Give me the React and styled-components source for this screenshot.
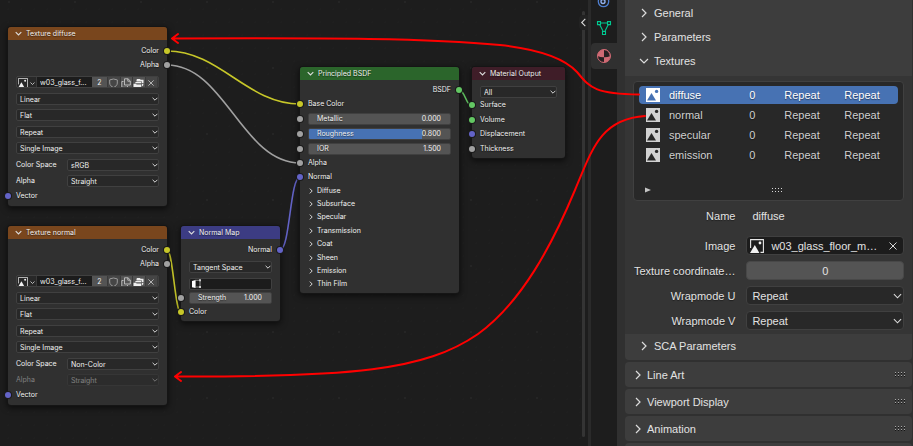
import React from "react";
import styled, { createGlobalStyle, css } from "styled-components";

const GlobalStyle = createGlobalStyle`
  *, *::before, *::after { box-sizing: border-box; }
  body { margin: 0; background: #1d1d1d; }
  button, input, select { font: inherit; color: inherit; margin: 0; padding: 0; border: 0; background: none; }
`;

const Page = styled.main`
  position: relative;
  display: grid;
  grid-template-columns: minmax(0, 591fr) 26px minmax(0, 296fr);
  height: 100vh;
  overflow: hidden;
  font-family: "Liberation Sans", Arial, sans-serif;
  font-size: 11px;
  color: #e2e2e2;
`;

/* ---------- node editor ---------- */

const Editor = styled.section`
  position: relative;
  overflow: hidden;
  border-right: 3px solid #2a2a2a;
  font-family: Inter, "Liberation Sans", sans-serif;
  font-size: 7px;
  line-height: 12px;
  color: #f0f0f0;
  background-color: #1d1d1d;
  background-image: radial-gradient(circle, #252525 1px, transparent 1px),
    radial-gradient(circle, #1f1f1f 1px, transparent 1px);
  background-size: 66px 66px, 13px 13px;
  background-position: 42px 35px, 2px 3px;
`;

const Wires = styled.svg`
  position: absolute;
  left: 0;
  top: 0;
  width: 591px;
  height: 446px;
  fill: none;
`;

const Node = styled.article`
  position: absolute;
  left: ${(p) => p.$x}px;
  top: ${(p) => p.$y}px;
  width: ${(p) => p.$w}px;
  background: #303030;
  border-radius: 3px;
  box-shadow: 0 0 0 1px #151515, 0 2px 6px 1px rgba(0, 0, 0, 0.6);
`;

const NodeHeader = styled.header`
  display: flex;
  align-items: center;
  gap: 4px;
  height: 13px;
  padding-left: 7px;
  border-radius: 3px 3px 0 0;
  background: ${(p) => p.$color};
`;

const NodeTitle = styled.h2`
  margin: 0;
  font-size: inherit;
  font-weight: 400;
  text-shadow: 0 1px 1px rgba(0, 0, 0, 0.5);
`;

const NodeBody = styled.div`
  padding: ${(p) => p.$top || 3}px 8px 2px;
`;

const SocketRow = styled.div`
  position: relative;
  display: flex;
  align-items: center;
  justify-content: ${(p) => (p.$out ? "flex-end" : "flex-start")};
  height: ${(p) => p.$h || 14}px;
  text-shadow: 0 1px 1px rgba(0, 0, 0, 0.5);
`;

const Socket = styled.i`
  position: absolute;
  top: 50%;
  ${(p) => (p.$out ? "right: -11px;" : "left: -11px;")}
  width: 6px;
  height: 6px;
  margin-top: -3px;
  border-radius: 50%;
  background: ${(p) => p.$color};
  box-shadow: 0 0 0 1px #1a1a1a;
`;

const Stack = styled.div`
  display: grid;
  gap: 5px;
  padding-top: ${(p) => p.$top || 0}px;
`;

const Pair = styled.div`
  display: grid;
  gap: 4px;
`;

const SelectBox = styled.span`
  position: relative;
  display: block;
  min-width: 0;
  opacity: ${(p) => (p.$dim ? 0.4 : 1)};
  select {
    display: block;
    width: 100%;
    height: ${(p) => (p.$large ? 19 : 12)}px;
    padding-left: ${(p) => (p.$large ? 5 : 3)}px;
    appearance: none;
    background: #282828;
    border: 1px solid #404040;
    border-radius: ${(p) => (p.$large ? 4 : 2)}px;
    outline: 0;
    opacity: 1;
    color: inherit;
  }
  svg {
    position: absolute;
    right: ${(p) => (p.$large ? 2 : 1)}px;
    top: 50%;
    transform: translateY(-50%);
    pointer-events: none;
  }
`;

const LabelledRow = styled.label`
  display: grid;
  grid-template-columns: 51px minmax(0, 1fr);
  align-items: center;
`;

const LabelText = styled.span`
  color: ${(p) => (p.$dim ? "#808080" : "inherit")};
  white-space: nowrap;
`;

const DataBlock = styled.div`
  display: grid;
  grid-template-columns: 20px minmax(0, 55px) 16px repeat(4, minmax(0, 1fr));
  height: 12px;
  border: 1px solid #404040;
  border-radius: 2px;
  overflow: hidden;
  background: #444;
`;

const BlockButton = styled.button`
  display: flex;
  align-items: center;
  justify-content: center;
  gap: ${(p) => (p.$dark ? 2 : 0)}px;
  min-width: 0;
  overflow: hidden;
  background: ${(p) => (p.$dark ? "#282828" : p.$lit ? "#545454" : "#464646")};
  border-right: 1px solid #3a3a3a;
  line-height: 10px;
  svg { flex: none; }
`;

const BlockName = styled.input`
  min-width: 0;
  width: 100%;
  padding-left: 3px;
  background: #1c1c1c;
  outline: 0;
`;

const Slider = styled.label`
  display: flex;
  align-items: center;
  justify-content: space-between;
  height: 12px;
  width: 100%;
  padding: 0 9px 0 8px;
  border-radius: 2px;
  border: 1px solid #404040;
  background: linear-gradient(90deg, #4772b3 ${(p) => p.$fill || 0}%, #545454 ${(p) => p.$fill || 0}%);
  input {
    width: 32px;
    height: 10px;
    text-align: right;
    outline: 0;
  }
`;

const UvField = styled.button`
  display: flex;
  align-items: center;
  width: 100%;
  height: 12px;
  padding-left: 1px;
  background: #1c1c1c;
  border: 1px solid #404040;
  border-radius: 2px;
`;

const SubPanels = styled.div`
  display: grid;
  grid-auto-rows: 1fr;
  height: 107px;
`;

const SubPanel = styled.button`
  display: flex;
  align-items: center;
  gap: 3px;
  text-align: left;
`;

const ScrollTrack = styled.div`
  position: absolute;
  right: 3px;
  top: 11px;
  bottom: 9px;
  width: 3px;
  border-radius: 2px;
  background: #343434;
`;

const SidebarToggle = styled.button`
  position: absolute;
  right: 0;
  top: 15px;
  width: 9px;
  height: 15px;
  display: flex;
  align-items: center;
  justify-content: center;
  border-radius: 4px 0 0 4px;
  background: #222;
`;

/* ---------- property tabs ---------- */

const TabBar = styled.nav`
  display: flex;
  flex-direction: column;
  gap: 1px;
  margin-top: -11px;
  background: #1d1d1d;
`;

const TabButton = styled.button`
  display: flex;
  align-items: center;
  justify-content: center;
  height: 26px;
  border-radius: 4px 0 0 4px;
  background: ${(p) => (p.$active ? "#303030" : "transparent")};
`;

/* ---------- properties ---------- */

const Properties = styled.aside`
  display: flex;
  flex-direction: column;
  gap: 2px;
  padding: 0 1px 0 8px;
  background: #303030;
  overflow: hidden;
  line-height: 14px;
  text-shadow: 0 1px 1px rgba(0, 0, 0, 0.45);
`;

const Card = styled.section`
  flex: none;
  background: #3d3d3d;
  border-radius: ${(p) => (p.$first ? "0 0 4px 4px" : "4px")};
  padding: ${(p) => (p.$first ? "1px 0 2px" : "0")};
`;

const PanelHeader = styled.button`
  display: flex;
  align-items: center;
  width: 100%;
  height: ${(p) => (p.$nested ? 24 : 25)}px;
  padding: 0 6px 0 ${(p) => (p.$nested ? 14 : 8)}px;
  gap: ${(p) => (p.$nested ? 5 : 4)}px;
  text-align: left;
`;

const HeaderText = styled.span`
  flex: 1;
`;

const PanelBody = styled.div`
  margin-top: 3px;
  padding: 5px 8px 4px;
  background: #353535;
`;

const ListBox = styled.div`
  height: 120px;
  display: flex;
  flex-direction: column;
  justify-content: space-between;
  padding: 2px 5px 5px;
  background: #282828;
  border: 1px solid #404040;
  border-radius: 4px;
`;

const TextureTable = styled.table`
  width: 100%;
  table-layout: fixed;
  border-collapse: separate;
  border-spacing: 0 2px;
`;

const TextureRow = styled.tr`
  color: ${(p) => (p.$selected ? "#fff" : "#cfcfcf")};
  td {
    height: 18px;
    padding: 0;
    ${(p) => p.$selected && css`background: #4772b3;`}
  }
  td:first-child { padding-left: 7px; border-radius: 4px 0 0 4px; }
  td:last-child { border-radius: 0 4px 4px 0; }
  svg { display: block; }
`;

const NameColumn = styled.col`
  width: 31%;
`;
const IconColumn = styled.col`
  width: 30px;
`;
const IndexColumn = styled.col`
  width: 35px;
`;
const ModeColumn = styled.col`
  width: 60px;
`;

const ListFooter = styled.div`
  display: grid;
  grid-template-columns: 10fr auto 9fr;
  align-items: center;
  padding-left: 6px;
  height: 10px;
`;

const FooterToggle = styled.button`
  display: flex;
`;

const Form = styled.div`
  display: grid;
  gap: 6px;
  padding-top: 5px;
`;

const FormRow = styled.label`
  display: grid;
  grid-template-columns: minmax(0, 39fr) minmax(0, 60fr);
  column-gap: 11px;
  align-items: center;
  height: 19px;
  > span:first-child { text-align: right; white-space: nowrap; }
`;

const NameRow = styled(FormRow)`
  margin-bottom: 5px;
`;

const PlainInput = styled.input`
  width: 100%;
  min-width: 0;
  padding-left: 6px;
  outline: 0;
`;

const ImageField = styled.span`
  display: flex;
  align-items: center;
  height: 19px;
  padding: 0 6px 0 3px;
  background: #1c1c1c;
  border: 1px solid #404040;
  border-radius: 4px;
  input { flex: 1; min-width: 0; padding-left: 7px; outline: 0; }
  button { display: flex; }
`;

const NumberInput = styled.input`
  width: 100%;
  height: 19px;
  text-align: center;
  background: #545454;
  border: 1px solid #484848;
  border-radius: 4px;
  outline: 0;
`;

/* ---------- drawings ---------- */

const AnnotationLayer = styled.svg`
  position: absolute;
  left: 0;
  top: 0;
  width: 913px;
  height: 446px;
  fill: none;
  stroke: #ff0000;
  stroke-width: 2;
  stroke-linecap: round;
  stroke-linejoin: round;
  pointer-events: none;
`;

const Chevron = ({ size = 6, dir = "down", color = "#dcdcdc" }) => {
  const d = { down: "M1 3 5 7 9 3", right: "M3 1 7 5 3 9", left: "M7 1 3 5 7 9" }[dir];
  return (
    <svg width={size} height={size} viewBox="0 0 10 10" fill="none" stroke={color} strokeWidth={size > 8 ? 1.2 : 1.6} aria-hidden="true">
      <path d={d} />
    </svg>
  );
};

const TextureIcon = ({ hole }) => (
  <svg width="14" height="14" viewBox="0 0 14 14" aria-hidden="true">
    <rect width="14" height="14" fill={hole === "#4772b3" ? "#fff" : "#d2d2d2"} />
    <path d="M1 12.5 5.5 5 10 12.5Z" fill={hole} />
    <circle cx="10.6" cy="3.4" r="1.7" fill={hole} />
  </svg>
);

const ImageIcon = ({ size = 9 }) => (
  <svg width={size} height={size} viewBox="0 0 14 14" aria-hidden="true">
    <path d="M.6 9V.6H13.4V13.4H10.5" fill="none" stroke="#e6e6e6" strokeWidth="1.1" />
    <path d="M0 14 4.8 6 9.4 14Z" fill="#f0f0f0" />
    <circle cx="10" cy="4" r="1.4" fill="#f0f0f0" />
  </svg>
);

const Cross = ({ size }) => (
  <svg width={size} height={size} viewBox="0 0 8 8" stroke="#d6d6d6" strokeWidth="1" aria-hidden="true">
    <path d="M.5.5 7.5 7.5M7.5.5.5 7.5" />
  </svg>
);

const ShieldIcon = () => (
  <svg width="9" height="10" viewBox="0 0 9 10" fill="none" stroke="#9a9a9a" aria-hidden="true">
    <path d="M4.5 1 8.3 1.9V5C8.3 7.2 6.6 8.6 4.5 9.5 2.4 8.6.7 7.2.7 5V1.9Z" />
  </svg>
);

const CopyIcon = () => (
  <svg width="10" height="10" viewBox="0 0 10 10" fill="none" stroke="#b8b8b8" aria-hidden="true">
    <path d="M3.5.8H7L9.3 3V7H3.5ZM6.8.8V3.2H9.3M2.5 3.5H.8V9.3H6.5V8" />
  </svg>
);

const PackIcon = () => (
  <svg width="11" height="10" viewBox="0 0 11 10" aria-hidden="true">
    <path d="M4 1H7L7.6 1.7H10.5V5H9V3.4H3.5V2Z" fill="#eee" />
    <path d="M2.4 4H8.4V5.2H2.4ZM.5 5.8H3L3.6 6.4H8.2V9.2H.5Z" fill="#eee" />
    <path d="M8.9 6 10.3 5.4V7.2L8.9 8.4Z" fill="#eee" />
  </svg>
);

const UvIcon = () => (
  <svg width="12" height="10" viewBox="0 0 12 10" aria-hidden="true">
    <path d="M1 2 4.6 1V9L1 8.2Z" fill="#fff" />
    <path d="M4 1.3H9M9 1.3V8M5 8H9" stroke="#aaa" strokeWidth=".8" fill="none" />
    <path d="M8 .3H10V2.3H8ZM8 7H10V9H8Z" fill="#ccc" />
  </svg>
);

const Grip = ({ bright }) => (
  <svg width="11" height="5" viewBox="0 0 11 5" fill={bright ? "#d8d8d8" : "#a8a8a8"} shapeRendering="crispEdges" aria-hidden="true">
    {[0, 3, 6, 9].map((x) => (
      <g key={x}>
        {!bright && <path d={`M${x} 1h1v1h-1ZM${x} 4h1v1h-1Z`} fill="#151515" />}
        <path d={`M${x} 0h1v1h-1ZM${x} 3h1v1h-1Z`} />
      </g>
    ))}
  </svg>
);

const PhysicsIcon = () => (
  <svg width="14" height="14" viewBox="0 0 14 14" fill="none" stroke="#4f7fd0" aria-hidden="true">
    <circle cx="6.5" cy="6.5" r="5.2" strokeWidth="1.3" />
    <circle cx="6" cy="6.5" r="2" stroke="#8fb0ee" strokeWidth="1.4" />
  </svg>
);

const MeshIcon = () => (
  <svg width="16" height="16" viewBox="0 0 16 16" fill="none" stroke="#00c890" strokeWidth="1.1" aria-hidden="true">
    <path d="M4.7 2H11.3M3.8 3.7 7.2 10.5M12.2 3.7 8.8 10.5" />
    <path d="M1.5.6H4.5V3.6H1.5ZM11.5.6H14.5V3.6H11.5ZM6.5 10.5H9.5V13.5H6.5Z" />
  </svg>
);

const MaterialIcon = () => (
  <svg width="16" height="16" viewBox="0 0 16 16" aria-hidden="true">
    <circle cx="8" cy="8" r="6.5" fill="#282022" stroke="#d06a74" strokeWidth="1" />
    <path d="M8 1.5A6.5 6.5 0 0 0 1.5 8Q4.5 9.3 8 9.2Z" fill="#d06a74" />
    <path d="M8 9.2Q11.5 9.3 14.5 8A6.5 6.5 0 0 1 8 14.5Z" fill="#d06a74" />
    <path d="M8 1.5Q12 1.8 12.5 4 13.8 5.5 14 8" fill="none" stroke="#d06a74" strokeWidth=".6" />
  </svg>
);

/* ---------- composed parts ---------- */

const YELLOW = "#c7c729";
const GREY = "#a1a1a1";
const VIOLET = "#6363c7";
const GREEN = "#63c763";

const Select = ({ value, label, large, dim }) => (
  <SelectBox $large={large} $dim={dim}>
    <select aria-label={label} defaultValue={value} disabled={dim}>
      <option>{value}</option>
    </select>
    <Chevron size={large ? 9 : 6} />
  </SelectBox>
);

const Port = ({ name, color, out, h }) => (
  <SocketRow $out={out} $h={h}>
    {name}
    <Socket $color={color} $out={out} />
  </SocketRow>
);

const NumberPort = ({ name, value, fill }) => (
  <SocketRow $h={15}>
    <Slider $fill={fill}>
      {name}
      <input defaultValue={value} />
    </Slider>
    <Socket $color={GREY} />
  </SocketRow>
);

const Title = ({ color, children }) => (
  <NodeHeader $color={color}>
    <Chevron size={7} />
    <NodeTitle>{children}</NodeTitle>
  </NodeHeader>
);

const TextureNode = ({ title, y, space, dimAlpha }) => (
  <Node $x={8} $y={y} $w={159}>
    <Title color="#79461d">{title}</Title>
    <NodeBody $top={4}>
      <Port name="Color" color={YELLOW} out />
      <Port name="Alpha" color={GREY} out />
      <Stack $top={4}>
        <DataBlock>
          <BlockButton $dark aria-label="Browse image"><ImageIcon size={10} /><Chevron size={5} /></BlockButton>
          <BlockName aria-label="Image name" defaultValue="w03_glass_f..." />
          <BlockButton $lit>2</BlockButton>
          <BlockButton aria-label="Fake user"><ShieldIcon /></BlockButton>
          <BlockButton $lit aria-label="New image"><CopyIcon /></BlockButton>
          <BlockButton $lit aria-label="Pack image"><PackIcon /></BlockButton>
          <BlockButton aria-label="Unlink"><Cross size={6} /></BlockButton>
        </DataBlock>
        <Pair>
          <Select label="Interpolation" value="Linear" />
          <Select label="Projection" value="Flat" />
        </Pair>
        <Pair>
          <Select label="Extension" value="Repeat" />
          <Select label="Source" value="Single Image" />
        </Pair>
        <Pair>
          <LabelledRow><LabelText>Color Space</LabelText><Select value={space} /></LabelledRow>
          <LabelledRow><LabelText $dim={dimAlpha}>Alpha</LabelText><Select value="Straight" dim={dimAlpha} /></LabelledRow>
        </Pair>
      </Stack>
      <Port name="Vector" color={VIOLET} h={17} />
    </NodeBody>
  </Node>
);

const PANELS = ["Diffuse", "Subsurface", "Specular", "Transmission", "Coat", "Sheen", "Emission", "Thin Film"];
const TEXTURES = ["diffuse", "normal", "specular", "emission"];

const NestedHeader = ({ children, open }) => (
  <PanelHeader $nested aria-expanded={!!open}>
    <Chevron size={10} dir={open ? "down" : "right"} />
    <HeaderText>{children}</HeaderText>
  </PanelHeader>
);

const ClosedCard = ({ children }) => (
  <Card>
    <PanelHeader aria-expanded={false}>
      <Chevron size={10} dir="right" />
      <HeaderText>{children}</HeaderText>
      <Grip />
    </PanelHeader>
  </Card>
);

export default function App() {
  return (
    <Page>
      <GlobalStyle />
      <Editor aria-label="Shader nodes">
        <Wires viewBox="0 0 591 446" strokeWidth="1.6" aria-hidden="true">
          <path d="M167 51C220 51 247 104 300 104" stroke="#c7c729" />
          <path d="M167 65C225 65 242 163 300 163" stroke="#a1a1a1" />
          <path d="M167 250C173 250 175 313 181 313" stroke="#c7c729" />
          <path d="M280 250C290 250 290 177 300 177" stroke="#6363c7" />
          <path d="M459 90C465 90 466 106 472 106" stroke="#63c763" />
        </Wires>
        <TextureNode title="Texture diffuse" y={27} space="sRGB" />
        <TextureNode title="Texture normal" y={226} space="Non-Color" dimAlpha />
        <Node $x={181} $y={226} $w={99}>
          <Title color="#3c3c83">Normal Map</Title>
          <NodeBody $top={4}>
            <Port name="Normal" color={VIOLET} out />
            <Stack $top={4}>
              <Select label="Space" value="Tangent Space" />
              <UvField aria-label="UV map"><UvIcon /></UvField>
            </Stack>
            <NumberPort name="Strength" value="1.000" />
            <Port name="Color" color={YELLOW} />
          </NodeBody>
        </Node>
        <Node $x={300} $y={67} $w={159}>
          <Title color="#2b652b">Principled BSDF</Title>
          <NodeBody>
            <Port name="BSDF" color={GREEN} out />
            <Port name="Base Color" color={YELLOW} />
            <NumberPort name="Metallic" value="0.000" />
            <NumberPort name="Roughness" value="0.800" fill={80} />
            <NumberPort name="IOR" value="1.500" />
            <Port name="Alpha" color={GREY} />
            <Port name="Normal" color={VIOLET} />
            <SubPanels>
              {PANELS.map((name) => (
                <SubPanel key={name}><Chevron size={6} dir="right" />{name}</SubPanel>
              ))}
            </SubPanels>
          </NodeBody>
        </Node>
        <Node $x={472} $y={67} $w={93}>
          <Title color="#3f1d28">Material Output</Title>
          <NodeBody $top={4}>
            <Stack $top={2}>
              <Select label="Target" value="All" />
            </Stack>
            <Port name="Surface" color={GREEN} />
            <Port name="Volume" color={GREEN} h={15} />
            <Port name="Displacement" color={VIOLET} />
            <Port name="Thickness" color={GREY} h={15} />
          </NodeBody>
        </Node>
        <ScrollTrack />
        <SidebarToggle aria-label="Show sidebar"><Chevron size={9} dir="left" /></SidebarToggle>
      </Editor>

      <TabBar aria-label="Property tabs">
        <TabButton aria-label="Physics"><PhysicsIcon /></TabButton>
        <TabButton aria-label="Data"><MeshIcon /></TabButton>
        <TabButton $active aria-label="Material"><MaterialIcon /></TabButton>
      </TabBar>

      <Properties>
        <Card $first>
          <NestedHeader>General</NestedHeader>
          <NestedHeader>Parameters</NestedHeader>
          <NestedHeader open>Textures</NestedHeader>
          <PanelBody>
            <ListBox>
              <TextureTable>
                <colgroup>
                  <IconColumn />
                  <NameColumn />
                  <IndexColumn />
                  <ModeColumn />
                  <col />
                </colgroup>
                <tbody>
                  {TEXTURES.map((name, i) => (
                    <TextureRow key={name} $selected={i === 0}>
                      <td><TextureIcon hole={i === 0 ? "#4772b3" : "#282828"} /></td>
                      <td>{name}</td>
                      <td>0</td>
                      <td>Repeat</td>
                      <td>Repeat</td>
                    </TextureRow>
                  ))}
                </tbody>
              </TextureTable>
              <ListFooter>
                <FooterToggle aria-label="Filter">
                  <svg width="6" height="6" viewBox="0 0 6 6" aria-hidden="true"><path d="M0 .5 6 3 0 5.5Z" fill="#c4c4c4" /></svg>
                </FooterToggle>
                <Grip bright />
              </ListFooter>
            </ListBox>
            <Form>
              <NameRow><span>Name</span><PlainInput defaultValue="diffuse" /></NameRow>
              <FormRow>
                <span>Image</span>
                <ImageField>
                  <ImageIcon size={14} />
                  <input aria-label="Image" defaultValue="w03_glass_floor_m…" />
                  <button aria-label="Clear image"><Cross size={8} /></button>
                </ImageField>
              </FormRow>
              <FormRow><span>Texture coordinate…</span><NumberInput defaultValue="0" /></FormRow>
              <FormRow><span>Wrapmode U</span><Select large value="Repeat" /></FormRow>
              <FormRow><span>Wrapmode V</span><Select large value="Repeat" /></FormRow>
            </Form>
          </PanelBody>
          <NestedHeader>SCA Parameters</NestedHeader>
        </Card>
        <ClosedCard>Line Art</ClosedCard>
        <ClosedCard>Viewport Display</ClosedCard>
        <ClosedCard>Animation</ClosedCard>
        <Card><PanelHeader aria-label="Custom properties" /></Card>
      </Properties>

      <AnnotationLayer viewBox="0 0 913 446" aria-hidden="true">
        <path d="M172 38.5C330 38 430 38 500 45 545 50 566 60 577 72 589 86 592 94 639 94.5M178 34 172 38.5 178 43" />
        <path d="M645 116C600 119 592 150 575 190 552 245 522 302 478 334 425 371 350 377 176 376.5M181 372 175 376.5 181 381" />
      </AnnotationLayer>
    </Page>
  );
}
